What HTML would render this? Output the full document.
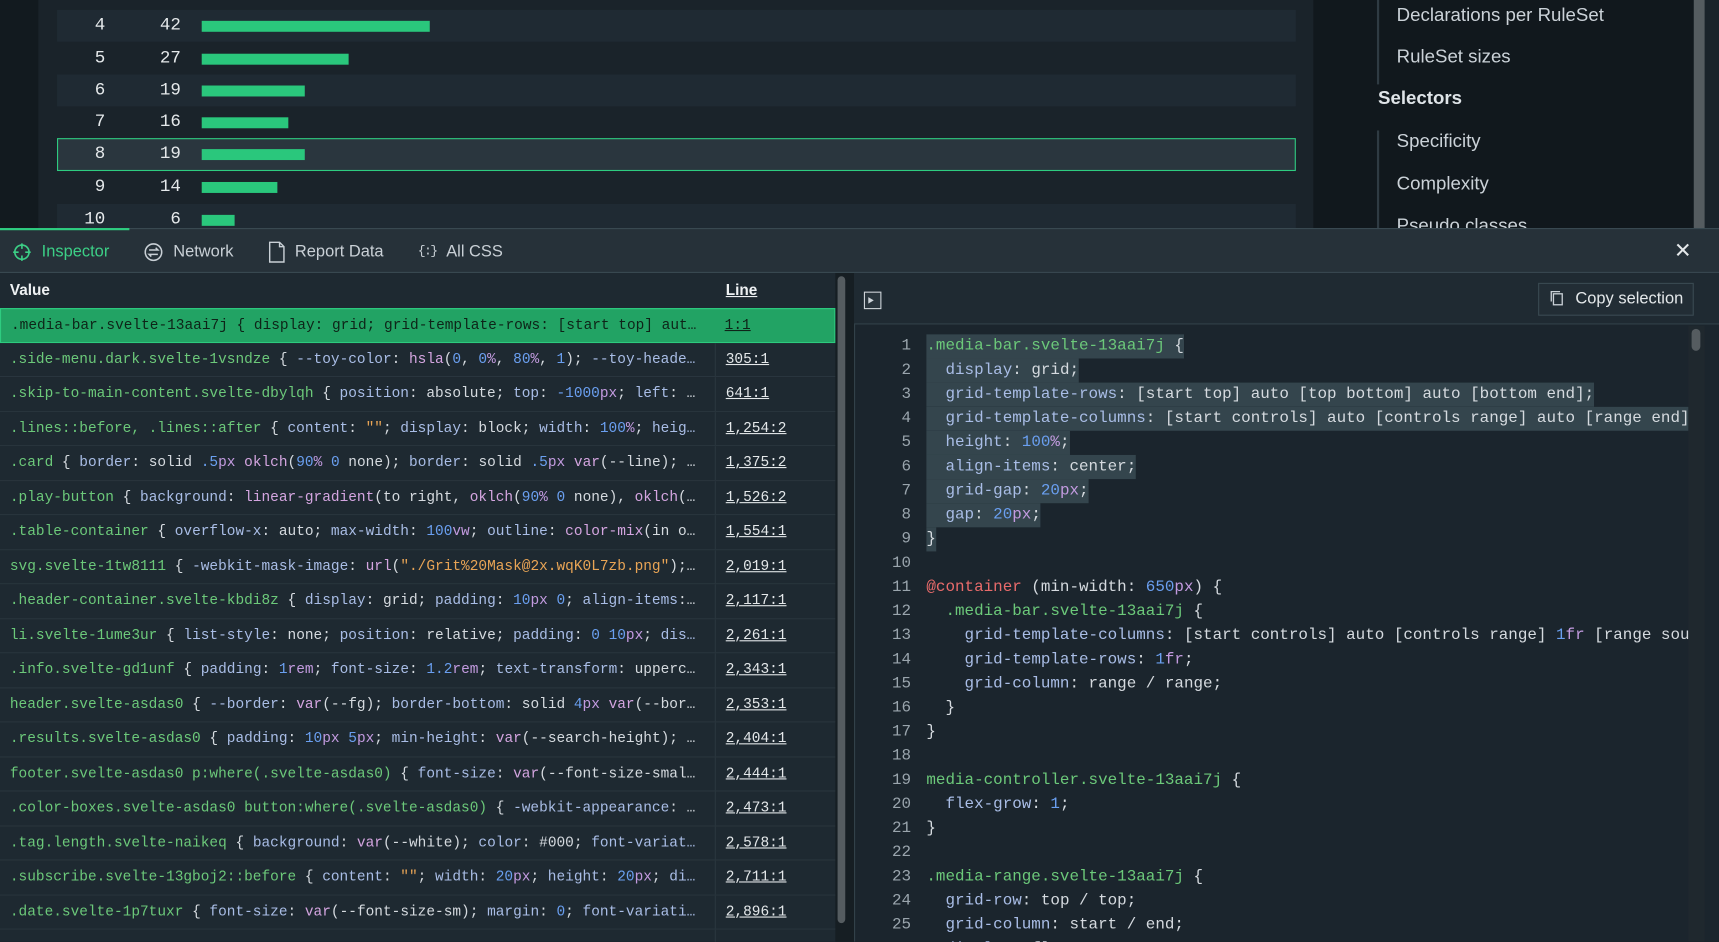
<!DOCTYPE html>
<html><head><meta charset="utf-8"><style>
*{box-sizing:border-box;margin:0;padding:0}
html,body{width:1719px;height:942px;overflow:hidden;background:#1a232a}
#w{position:absolute;left:0;top:0;width:1568px;height:859px;transform:scale(1.09630);transform-origin:0 0;font-family:"Liberation Sans",sans-serif;color:#d5dadf;overflow:hidden;background:#1a232a}
.abs{position:absolute}
.mono{font-family:"Liberation Mono",monospace}
.row{position:absolute;left:52px;width:1130px;height:29px}
.row .a,.row .b{position:absolute;top:5px;font-size:16px;font-family:"Liberation Mono",monospace;color:#e4e8ea;text-align:right}
.row .a{left:-12px;width:56px}.row .b{left:57px;width:56px}
.row .bar{position:absolute;left:132px;top:10px;height:10px;background:#2ac77c}
.side{position:absolute;left:1274px;font-size:17px;color:#cbd2d8}
.tab{position:absolute;top:221px;font-size:15px;color:#c9d0d6}
.li{position:absolute;left:0;width:762px;height:31.5px;border-bottom:1px solid #2a363e;background:#1e2931;font-family:"Liberation Mono",monospace;font-size:13.2px;line-height:30px;white-space:nowrap}
.li .t{position:absolute;left:9px;width:640px;overflow:hidden}
.li .l{position:absolute;left:652px;top:0;bottom:0;border-left:1px solid #2a363e;padding-left:9px;text-decoration:underline;color:#e4e8ea}
.s{color:#6cc97a}.p{color:#a9bde6}.n{color:#6a9ff0}.u{color:#c39be0}.f{color:#d4a5e0}.q{color:#e8a455}.at{color:#e96b6b}
.cl{position:absolute;left:779px;width:760px;height:22px;font-family:"Liberation Mono",monospace;font-size:14.5px;line-height:22px;white-space:pre}
.cl .ln{position:absolute;left:0;width:52px;text-align:right;color:#9aa5ad}
.cl .c{position:absolute;left:66px}
.hl{background:#34454d}
</style></head><body><div id="w">
<div class="abs" style="left:0;top:0;width:35px;height:208px;background:#121a1f"></div>
<div class="abs" style="left:35px;top:0;width:1163px;height:208px;background:#1a232a"></div>
<div class="row" style="top:9px;background:#1f2a33"><span class="a">4</span><span class="b">42</span><span class="bar" style="width:208px"></span></div>
<div class="row" style="top:39px"><span class="a">5</span><span class="b">27</span><span class="bar" style="width:134px"></span></div>
<div class="row" style="top:68px;background:#1f2a33"><span class="a">6</span><span class="b">19</span><span class="bar" style="width:94px"></span></div>
<div class="row" style="top:97px"><span class="a">7</span><span class="b">16</span><span class="bar" style="width:79px"></span></div>
<div class="row" style="top:126px;height:30px;background:#2a363e;border:1px solid #2ecc80"><span class="a" style="top:4px;left:-13px">8</span><span class="b" style="top:4px;left:56px">19</span><span class="bar" style="width:94px;left:131px;top:9px"></span></div>
<div class="row" style="top:156px"><span class="a">9</span><span class="b">14</span><span class="bar" style="width:69px"></span></div>
<div class="row" style="top:186px;background:#1f2a33"><span class="a">10</span><span class="b">6</span><span class="bar" style="width:30px"></span></div>
<div class="abs" style="left:1198px;top:0;width:347px;height:208px;background:#11181d"></div>
<div class="abs" style="left:1256px;top:0;width:2px;height:77px;background:#2f3b43"></div>
<div class="abs" style="left:1256px;top:119px;width:2px;height:90px;background:#2f3b43"></div>
<div class="side" style="top:4px">Declarations per RuleSet</div>
<div class="side" style="top:42px">RuleSet sizes</div>
<div class="side" style="left:1257px;top:80px;font-weight:bold;color:#dfe4e8">Selectors</div>
<div class="side" style="top:119px">Specificity</div>
<div class="side" style="top:158px">Complexity</div>
<div class="side" style="top:196px">Pseudo classes</div>
<div class="abs" style="left:1545px;top:0;width:10px;height:208px;background:#555c60"></div>
<div class="abs" style="left:1555px;top:0;width:13px;height:208px;background:#1a232a"></div>
<!-- tabs -->
<div class="abs" style="left:0;top:208px;width:1568px;height:41px;background:#263139;border-top:1px solid #3a4a52;border-bottom:1px solid #3a4a52"></div>
<div class="abs" style="left:0;top:208px;width:118px;height:2px;background:#2ecc80"></div>
<svg class="abs" style="left:11px;top:221px" width="18" height="18" viewBox="0 0 18 18" fill="none" stroke="#3ccf86" stroke-width="1.5"><circle cx="9" cy="9" r="6.5"/><path d="M9 1v5M9 12v5M1 9h5M12 9h5"/></svg>
<div class="tab" style="left:38px;color:#3ccf86">Inspector</div>
<svg class="abs" style="left:131px;top:221px" width="18" height="18" viewBox="0 0 18 18" fill="none" stroke="#c9d0d6" stroke-width="1.4"><circle cx="9" cy="9" r="7.5"/><path d="M5 7h8l-2-2M13 11H5l2 2"/></svg>
<div class="tab" style="left:158px">Network</div>
<svg class="abs" style="left:245px;top:220px" width="15" height="20" viewBox="0 0 15 20" fill="none" stroke="#c9d0d6" stroke-width="1.3"><path d="M1 1h9l4 4v14H1z M10 1v4h4"/></svg>
<div class="tab" style="left:269px">Report Data</div>
<div class="tab" style="left:381px;font-family:'Liberation Mono',monospace;font-size:12px;top:222px;letter-spacing:-1.5px">{:}</div>
<div class="tab" style="left:407px">All CSS</div>
<div class="tab" style="left:1527px;font-size:19px;top:218px;color:#e4e8ea">✕</div>
<!-- left list -->
<div class="abs" style="left:0;top:249px;width:762px;height:32px;background:#1e2931"></div>
<div class="abs" style="left:9px;top:256px;font-size:14px;font-weight:bold;color:#eef1f3">Value</div>
<div class="abs" style="left:662px;top:256px;font-size:14px;font-weight:bold;color:#eef1f3;text-decoration:underline">Line</div>
<div class="li" style="top:281px;background:#22a364;border:1px solid #2ecc80;color:#10251a"><span class="t" style="color:#0e2418">.media-bar.svelte-13aai7j { display: grid; grid-template-rows: [start top] aut…</span><span class="l" style="border:none;color:#0e2418;left:651px">1:1</span></div>
<div class="li" style="top:312.5px"><span class="t"><span class="s">.side-menu.dark.svelte-1vsndze</span> { <span class="p">--toy-color</span>: <span class="f">hsla</span>(<span class="n">0</span>, <span class="n">0</span><span class="u">%</span>, <span class="n">80</span><span class="u">%</span>, <span class="n">1</span>); <span class="p">--toy-heade…</span></span><span class="l">305:1</span></div>
<div class="li" style="top:344px"><span class="t"><span class="s">.skip-to-main-content.svelte-dbylqh</span> { <span class="p">position</span>: absolute; <span class="p">top</span>: <span class="n">-1000</span><span class="u">px</span>; <span class="p">left</span>: …</span><span class="l">641:1</span></div>
<div class="li" style="top:375.5px"><span class="t"><span class="s">.lines::before, .lines::after</span> { <span class="p">content</span>: <span class="q">""</span>; <span class="p">display</span>: block; <span class="p">width</span>: <span class="n">100</span><span class="u">%</span>; <span class="p">heig…</span></span><span class="l">1,254:2</span></div>
<div class="li" style="top:407px"><span class="t"><span class="s">.card</span> { <span class="p">border</span>: solid <span class="n">.5</span><span class="u">px</span> <span class="f">oklch</span>(<span class="n">90</span><span class="u">%</span> <span class="n">0</span> none); <span class="p">border</span>: solid <span class="n">.5</span><span class="u">px</span> <span class="f">var</span>(--line); …</span><span class="l">1,375:2</span></div>
<div class="li" style="top:438.5px"><span class="t"><span class="s">.play-button</span> { <span class="p">background</span>: <span class="f">linear-gradient</span>(to right, <span class="f">oklch</span>(<span class="n">90</span><span class="u">%</span> <span class="n">0</span> none), <span class="f">oklch</span>(…</span><span class="l">1,526:2</span></div>
<div class="li" style="top:470px"><span class="t"><span class="s">.table-container</span> { <span class="p">overflow-x</span>: auto; <span class="p">max-width</span>: <span class="n">100</span><span class="u">vw</span>; <span class="p">outline</span>: <span class="f">color-mix</span>(in o…</span><span class="l">1,554:1</span></div>
<div class="li" style="top:501.5px"><span class="t"><span class="s">svg.svelte-1tw8111</span> { <span class="p">-webkit-mask-image</span>: <span class="f">url</span>(<span class="q">"./Grit%20Mask@2x.wqK0L7zb.png"</span>);…</span><span class="l">2,019:1</span></div>
<div class="li" style="top:533px"><span class="t"><span class="s">.header-container.svelte-kbdi8z</span> { <span class="p">display</span>: grid; <span class="p">padding</span>: <span class="n">10</span><span class="u">px</span> <span class="n">0</span>; <span class="p">align-items</span>:…</span><span class="l">2,117:1</span></div>
<div class="li" style="top:564.5px"><span class="t"><span class="s">li.svelte-1ume3ur</span> { <span class="p">list-style</span>: none; <span class="p">position</span>: relative; <span class="p">padding</span>: <span class="n">0</span> <span class="n">10</span><span class="u">px</span>; <span class="p">dis…</span></span><span class="l">2,261:1</span></div>
<div class="li" style="top:596px"><span class="t"><span class="s">.info.svelte-gd1unf</span> { <span class="p">padding</span>: <span class="n">1</span><span class="u">rem</span>; <span class="p">font-size</span>: <span class="n">1.2</span><span class="u">rem</span>; <span class="p">text-transform</span>: upperc…</span><span class="l">2,343:1</span></div>
<div class="li" style="top:627.5px"><span class="t"><span class="s">header.svelte-asdas0</span> { <span class="p">--border</span>: <span class="f">var</span>(--fg); <span class="p">border-bottom</span>: solid <span class="n">4</span><span class="u">px</span> <span class="f">var</span>(--bor…</span><span class="l">2,353:1</span></div>
<div class="li" style="top:659px"><span class="t"><span class="s">.results.svelte-asdas0</span> { <span class="p">padding</span>: <span class="n">10</span><span class="u">px</span> <span class="n">5</span><span class="u">px</span>; <span class="p">min-height</span>: <span class="f">var</span>(--search-height); …</span><span class="l">2,404:1</span></div>
<div class="li" style="top:690.5px"><span class="t"><span class="s">footer.svelte-asdas0 p:where(.svelte-asdas0)</span> { <span class="p">font-size</span>: <span class="f">var</span>(--font-size-smal…</span><span class="l">2,444:1</span></div>
<div class="li" style="top:722px"><span class="t"><span class="s">.color-boxes.svelte-asdas0 button:where(.svelte-asdas0)</span> { <span class="p">-webkit-appearance</span>: …</span><span class="l">2,473:1</span></div>
<div class="li" style="top:753.5px"><span class="t"><span class="s">.tag.length.svelte-naikeq</span> { <span class="p">background</span>: <span class="f">var</span>(--white); <span class="p">color</span>: #000; <span class="p">font-variat…</span></span><span class="l">2,578:1</span></div>
<div class="li" style="top:785px"><span class="t"><span class="s">.subscribe.svelte-13gboj2::before</span> { <span class="p">content</span>: <span class="q">""</span>; <span class="p">width</span>: <span class="n">20</span><span class="u">px</span>; <span class="p">height</span>: <span class="n">20</span><span class="u">px</span>; <span class="p">di…</span></span><span class="l">2,711:1</span></div>
<div class="li" style="top:816.5px"><span class="t"><span class="s">.date.svelte-1p7tuxr</span> { <span class="p">font-size</span>: <span class="f">var</span>(--font-size-sm); <span class="p">margin</span>: <span class="n">0</span>; <span class="p">font-variati…</span></span><span class="l">2,896:1</span></div>
<div class="li" style="top:848px"><span class="t"></span><span class="l"></span></div>
<div class="abs" style="left:762px;top:249px;width:17px;height:610px;background:#161e23"></div>
<div class="abs" style="left:764px;top:252px;width:7px;height:590px;border-radius:4px;background:#555c60"></div>
<!-- right panel -->
<div class="abs" style="left:779px;top:249px;width:789px;height:610px;background:#1b252d;border-left:1px solid #33424a"></div>
<div class="abs" style="left:779px;top:249px;width:789px;height:47px;background:#1f2a32;border-bottom:1px solid #33424a"></div>
<div class="abs" style="left:788px;top:266px;width:16px;height:16px;border:1.5px solid #cfd5da;background:#2a353d"></div>
<div class="abs" style="left:792px;top:271px;width:0;height:0;border-left:5px solid #cfd5da;border-top:3.5px solid transparent;border-bottom:3.5px solid transparent"></div>
<div class="abs" style="left:1403px;top:258px;width:142px;height:30px;border:1px solid #3a4a52;background:#222d35"></div>
<svg class="abs" style="left:1413px;top:264px" width="14" height="16" viewBox="0 0 14 16" fill="none" stroke="#c9d0d6" stroke-width="1.2"><rect x="4" y="4" width="8" height="10"/><path d="M2 11V2h8"/></svg>
<div class="abs" style="left:1437px;top:264px;font-size:15px;color:#e4e8ea">Copy selection</div>
<div class="abs" style="left:1540px;top:297px;width:15px;height:562px;background:#1f282e"></div>
<div class="abs" style="left:1543px;top:300px;width:8px;height:20px;border-radius:4px;background:#555c60"></div>
<div class="cl" style="top:305px"><span class="ln">1</span><span class="c hl"><span class="s">.media-bar.svelte-13aai7j</span> {</span></div>
<div class="cl" style="top:327px"><span class="ln">2</span><span class="c hl">  <span class="p">display</span>: grid;</span></div>
<div class="cl" style="top:349px"><span class="ln">3</span><span class="c hl">  <span class="p">grid-template-rows</span>: [start top] auto [top bottom] auto [bottom end];</span></div>
<div class="cl" style="top:371px;overflow:hidden;width:761px"><span class="ln">4</span><span class="c hl">  <span class="p">grid-template-columns</span>: [start controls] auto [controls range] auto [range end]</span></div>
<div class="cl" style="top:393px"><span class="ln">5</span><span class="c hl">  <span class="p">height</span>: <span class="n">100</span><span class="u">%</span>;</span></div>
<div class="cl" style="top:415px"><span class="ln">6</span><span class="c hl">  <span class="p">align-items</span>: center;</span></div>
<div class="cl" style="top:437px"><span class="ln">7</span><span class="c hl">  <span class="p">grid-gap</span>: <span class="n">20</span><span class="u">px</span>;</span></div>
<div class="cl" style="top:459px"><span class="ln">8</span><span class="c hl">  <span class="p">gap</span>: <span class="n">20</span><span class="u">px</span>;</span></div>
<div class="cl" style="top:481px"><span class="ln">9</span><span class="c hl">}</span></div>
<div class="cl" style="top:503px"><span class="ln">10</span></div>
<div class="cl" style="top:525px"><span class="ln">11</span><span class="c"><span class="at">@container</span> (min-width: <span class="n">650</span><span class="u">px</span>) {</span></div>
<div class="cl" style="top:547px"><span class="ln">12</span><span class="c">  <span class="s">.media-bar.svelte-13aai7j</span> {</span></div>
<div class="cl" style="top:569px;overflow:hidden;width:761px"><span class="ln">13</span><span class="c">    <span class="p">grid-template-columns</span>: [start controls] auto [controls range] <span class="n">1</span><span class="u">fr</span> [range sou</span></div>
<div class="cl" style="top:591px"><span class="ln">14</span><span class="c">    <span class="p">grid-template-rows</span>: <span class="n">1</span><span class="u">fr</span>;</span></div>
<div class="cl" style="top:613px"><span class="ln">15</span><span class="c">    <span class="p">grid-column</span>: range / range;</span></div>
<div class="cl" style="top:635px"><span class="ln">16</span><span class="c">  }</span></div>
<div class="cl" style="top:657px"><span class="ln">17</span><span class="c">}</span></div>
<div class="cl" style="top:679px"><span class="ln">18</span></div>
<div class="cl" style="top:701px"><span class="ln">19</span><span class="c"><span class="s">media-controller.svelte-13aai7j</span> {</span></div>
<div class="cl" style="top:723px"><span class="ln">20</span><span class="c">  <span class="p">flex-grow</span>: <span class="n">1</span>;</span></div>
<div class="cl" style="top:745px"><span class="ln">21</span><span class="c">}</span></div>
<div class="cl" style="top:767px"><span class="ln">22</span></div>
<div class="cl" style="top:789px"><span class="ln">23</span><span class="c"><span class="s">.media-range.svelte-13aai7j</span> {</span></div>
<div class="cl" style="top:811px"><span class="ln">24</span><span class="c">  <span class="p">grid-row</span>: top / top;</span></div>
<div class="cl" style="top:833px"><span class="ln">25</span><span class="c">  <span class="p">grid-column</span>: start / end;</span></div>
<div class="cl" style="top:855px"><span class="ln">26</span><span class="c">  <span class="p">display</span>: flex;</span></div>
</div></body></html>
